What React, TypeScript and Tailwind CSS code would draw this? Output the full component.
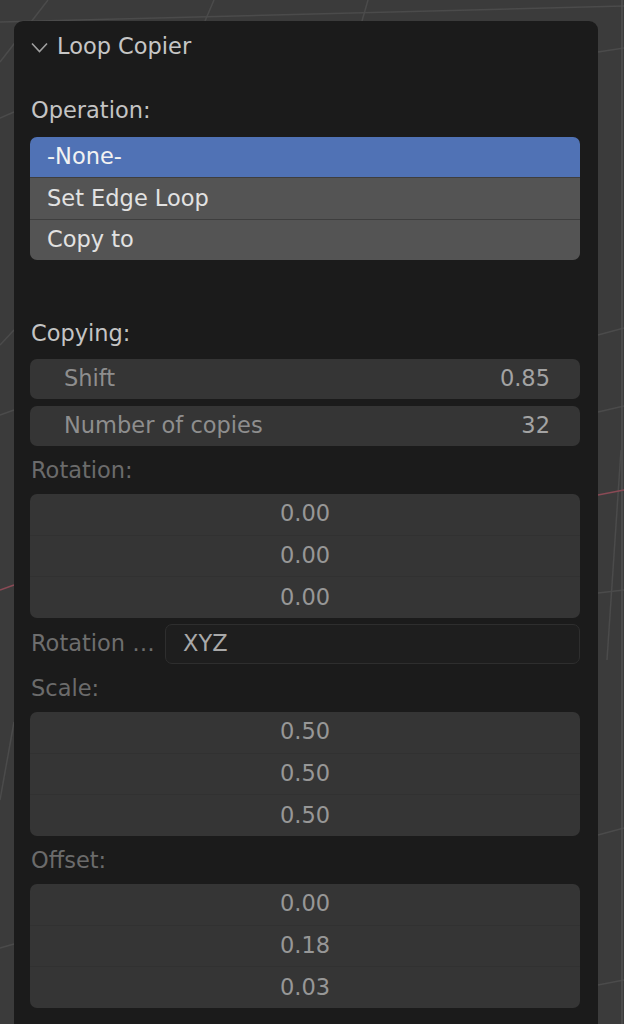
import React from 'react';

const font = { fontFamily: '"DejaVu Sans", "Liberation Sans", sans-serif' };

function Label({ text, dim = false }: { text: string; dim?: boolean }) {
    return (
        <div className={`mt-[5px] h-[40px] flex items-center pl-[1px] text-[22.5px] ${dim ? 'text-[#6b6b6b]' : 'text-[#c4c4c4]'}`}>
            {text}
        </div>
    );
}

// stacked vector field (x / y / z rows sharing one rounded box)
function VectorBox({ values }: { values: string[] }) {
    return (
        <div className="mt-[3px] h-[124px] rounded-[7px] bg-[#353535] overflow-hidden flex flex-col">
            {values.map((v, i) => (
                <div
                    key={i}
                    className={`flex-1 flex items-center justify-center text-[22.5px] text-[#979797] ${i > 0 ? 'border-t border-[#313131]' : ''}`}
                >
                    {v}
                </div>
            ))}
        </div>
    );
}

function NumField({ label, value, className = '' }: { label: string; value: string; className?: string }) {
    return (
        <div className={`h-[40px] rounded-[7px] bg-[#353535] flex items-center justify-between pl-[34px] pr-[30px] text-[22.5px] ${className}`}>
            <span className="text-[#8e8e8e]">{label}</span>
            <span className="text-[#a3a3a3]">{value}</span>
        </div>
    );
}

function Viewport() {
    // faint grid of the 3D viewport behind the panel
    return (
        <svg className="absolute inset-0" width="624" height="1024" viewBox="0 0 624 1024">
            <g stroke="#4b4b4b" strokeWidth="1.5" fill="none">
                <line x1="0" y1="62" x2="48" y2="0" />
                <line x1="0" y1="22" x2="624" y2="6" />
                <line x1="205" y1="21" x2="214" y2="0" />
                <line x1="362" y1="21" x2="368" y2="0" />
                <line x1="598" y1="52" x2="624" y2="48" />
                <line x1="0" y1="118" x2="14" y2="112" />
                <line x1="0" y1="345" x2="14" y2="330" />
                <line x1="0" y1="415" x2="14" y2="410" />
                <line x1="598" y1="335" x2="624" y2="328" />
                <line x1="598" y1="412" x2="624" y2="406" />
                <line x1="598" y1="593" x2="624" y2="590" />
                <line x1="621" y1="450" x2="607" y2="660" />
                <line x1="0" y1="800" x2="14" y2="722" />
                <line x1="0" y1="948" x2="14" y2="944" />
                <line x1="598" y1="835" x2="624" y2="828" />
                <line x1="598" y1="985" x2="624" y2="980" />
                <line x1="622" y1="0" x2="622" y2="1024" stroke="#525252" />
            </g>
            <g stroke="#8a4a55" strokeWidth="1.5">
                <line x1="0" y1="590" x2="14" y2="585" />
                <line x1="598" y1="495" x2="624" y2="490" />
            </g>
        </svg>
    );
}

export default function App() {
    return (
        <div className="relative w-[624px] h-[1024px] overflow-hidden bg-[#3b3b3b]" style={font}>
            <Viewport />

            <div className="relative pt-[21px] pl-[14px]">
                <div className="w-[584px] h-[1040px] rounded-[9px] bg-[#1b1b1b] pl-[16px] pr-[18px]">

                    {/* Panel header */}
                    <div className="h-[52px] flex items-center">
                        <svg width="17" height="11" viewBox="0 0 17 11" className="ml-[1px] mr-[9px]">
                            <path d="M1 1.5 L8.5 9.5 L16 1.5" stroke="#a0a0a0" strokeWidth="1.6" fill="none" />
                        </svg>
                        <span className="text-[22.5px] text-[#c6c6c6]">Loop Copier</span>
                    </div>

                    <div className="mt-[18px] h-[40px] flex items-center pl-[1px] text-[22.5px] text-[#c4c4c4]">Operation:</div>

                    {/* Operation list */}
                    <div className="mt-[6px] rounded-[7px] overflow-hidden text-[22.5px]">
                        <div className="h-[40px] flex items-center pl-[17px] bg-[#5072b5] text-[#f2f2f2]">-None-</div>
                        <div className="h-[42px] flex items-center pl-[17px] bg-[#545454] border-t border-[#3e3e3e] text-[#e2e2e2]">Set Edge Loop</div>
                        <div className="h-[41px] flex items-center pl-[17px] bg-[#545454] border-t border-[#3e3e3e] text-[#e2e2e2]">Copy to</div>
                    </div>

                    <div className="mt-[54px] h-[40px] flex items-center pl-[1px] text-[22.5px] text-[#c4c4c4]">Copying:</div>

                    <NumField label="Shift" value="0.85" className="mt-[5px]" />
                    <NumField label="Number of copies" value="32" className="mt-[7px]" />

                    <Label text="Rotation:" dim />
                    <VectorBox values={['0.00', '0.00', '0.00']} />

                    {/* Rotation mode */}
                    <div className="mt-[6px] h-[40px] flex items-center text-[22.5px]">
                        <span className="w-[135px] pl-[1px] text-[#6e6e6e] whitespace-nowrap">Rotation …</span>
                        <div className="flex-1 h-full rounded-[7px] bg-[#1e1e1e] border border-[#2e2e2e] flex items-center pl-[17px] text-[#a9a9a9]">
                            XYZ
                        </div>
                    </div>

                    <Label text="Scale:" dim />
                    <VectorBox values={['0.50', '0.50', '0.50']} />

                    <Label text="Offset:" dim />
                    <VectorBox values={['0.00', '0.18', '0.03']} />
                </div>
            </div>
        </div>
    );
}
